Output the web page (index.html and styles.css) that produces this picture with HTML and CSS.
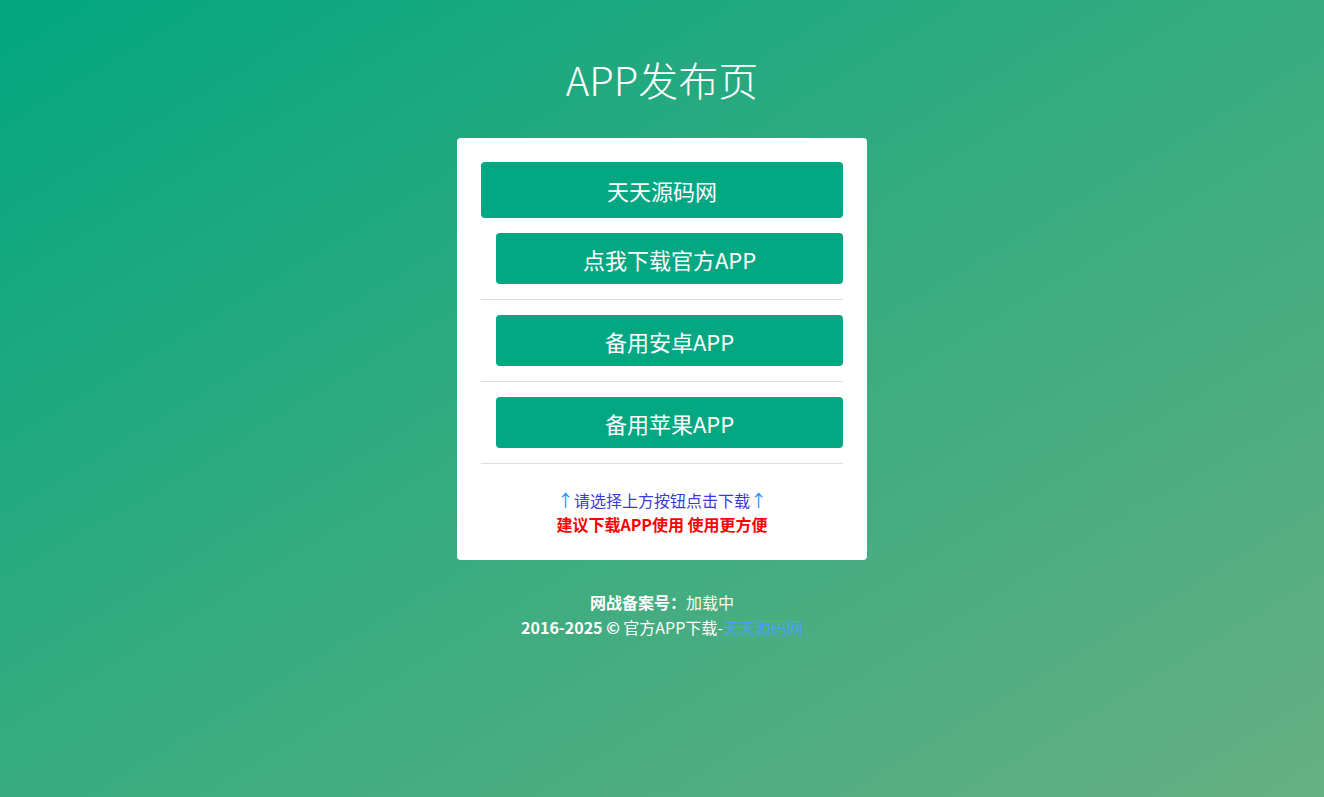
FILE: index.html
```html
<!DOCTYPE html>
<html lang="zh-CN">
<head>
<meta charset="utf-8">
<title>APP发布页</title>
<link rel="stylesheet" href="styles.css">
</head>
<body>
<div class="page">
  <h1 class="title">APP发布页</h1>
  <div class="card">
    <a class="btn btn-main" href="#">天天源码网</a>
    <a class="btn btn-sub" href="#">点我下载官方APP</a>
    <div class="sep"></div>
    <a class="btn btn-sub" href="#">备用安卓APP</a>
    <div class="sep"></div>
    <a class="btn btn-sub" href="#">备用苹果APP</a>
    <div class="sep"></div>
    <p class="tip"><span class="arrow">↑</span>请选择上方按钮点击下载<span class="arrow">↑</span></p>
    <p class="warn">建议下载APP使用 使用更方便</p>
  </div>
  <div class="footer">
    <p><b>网战备案号：</b><span class="loading">加载中</span></p>
    <p><b>2016-2025 ©</b> 官方APP下载-<a class="link" href="#">天天源码网</a></p>
  </div>
</div>
</body>
</html>
```
FILE: styles.css
```css
* { box-sizing: border-box; }
html, body { margin: 0; padding: 0; }
body {
  min-height: 100vh;
  font-family: "Noto Sans CJK SC", "Noto Sans", sans-serif;
  background: linear-gradient(to bottom right, #02a67f 0%, #33ab80 45%, #66af83 100%);
  color: #fff;
}
.page {
  display: flex;
  flex-direction: column;
  align-items: center;
  padding-top: 54px;
}
.title {
  margin: 0;
  font-size: 40px;
  line-height: 50px;
  font-weight: 300;
  color: #fff;
}
.card {
  margin-top: 34px;
  width: 410px;
  background: #fff;
  border-radius: 4px;
  padding: 24px;
  display: flex;
  flex-direction: column;
}
.btn {
  display: flex;
  align-items: center;
  justify-content: center;
  background: #03a882;
  color: #fff;
  text-decoration: none;
  border-radius: 4px;
  font-size: 22px;
}
.btn-main {
  height: 56px;
}
.btn-sub {
  height: 51px;
  margin: 15px 0 15px 15px;
}
.sep {
  height: 1px;
  background: #dddddd;
}
.tip {
  margin: 24px 0 0;
  text-align: center;
  font-size: 16px;
  line-height: 24px;
  color: #3a3ae0;
}
.arrow {
  color: #1e90ff;
  font-size: 17px;
}
.warn {
  margin: 0;
  text-align: center;
  font-size: 16px;
  line-height: 24px;
  font-weight: 700;
  color: #ff0000;
}
.footer {
  margin-top: 30px;
  text-align: center;
  font-size: 16px;
  line-height: 25px;
}
.footer p { margin: 0; }
.footer b { font-weight: 700; }
.loading { color: #fffbe6; }
.link { color: #4aa3f2; text-decoration: none; }
```
